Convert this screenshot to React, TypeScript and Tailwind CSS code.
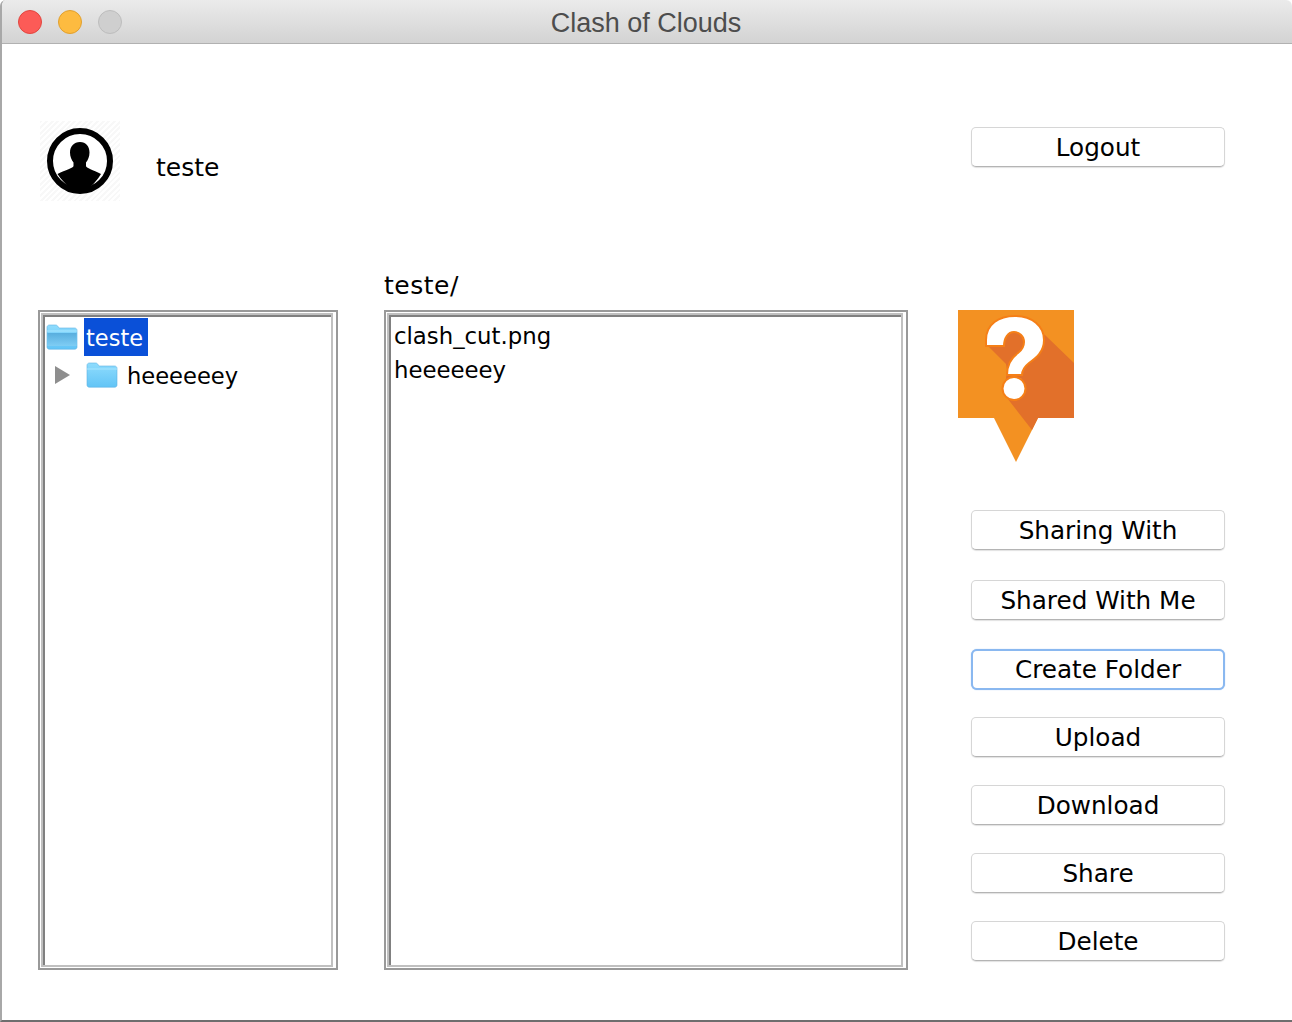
import React from 'react';

const FONT = "font-['DejaVu_Sans',sans-serif]";

const Folder: React.FC<{ selected?: boolean }> = ({ selected }) => (
  <svg width="32" height="26" viewBox="0 0 32 26" className="shrink-0">
    <defs>
      <linearGradient id="folderBody" x1="0" y1="0" x2="0" y2="1">
        <stop offset="0" stopColor="#8fdcfd" />
        <stop offset="1" stopColor="#62c4f6" />
      </linearGradient>
      <linearGradient id="folderShade" x1="0" y1="0" x2="0" y2="1">
        <stop offset="0" stopColor="#58aede" />
        <stop offset="1" stopColor="#7fcdf4" />
      </linearGradient>
    </defs>
    <path d="M1 3.5C1 2 2 1 3.500 1h6c1.200 0 1.800.5 2.500 1.500l1 1.500h15.500C30 4 31 5 31 6.500V23c0 1.300-1 2.200-2.200 2.200H3.200C2 25.200 1 24.300 1 23z" fill="url(#folderBody)" stroke="#5fb4e2" strokeWidth="0.6" />
    <path d="M1 7h30" stroke="#a9e6ff" strokeWidth="1" />
    {selected && <path d="M1.300 9h29.400v13H1.300z" fill="url(#folderShade)" />}
  </svg>
);

const HelpPin: React.FC = () => (
  <svg width="116" height="152" viewBox="0 0 116 152" className="block">
    <path d="M0 0h116v108H80l-22 44-22-44H0z" fill="#f39122" />
    <path d="M30 36L46 18l41 7 29 28v55H80l-6 12-28-36 3-24-1-6z" fill="#e2702a" />
    <path d="M28 30C28 14 41 6 57 6c17 0 29 10 29 24 0 12-8 18-15 23-5 4-7 7-7 12H49c0-10 4-17 11-22 4-3 6-6 6-11 0-6-5-10-10-10-6 0-10 6-10 14H28z" fill="#fff" stroke="#f57f17" strokeWidth="2" />
    <circle cx="56" cy="78.500" r="11.500" fill="#fff" stroke="#f57f17" strokeWidth="2" />
  </svg>
);

const Avatar: React.FC = () => (
  <div className="w-20 h-20 bg-[repeating-linear-gradient(135deg,#f8f8f8_0,#f8f8f8_2px,#ffffff_2px,#ffffff_4px)] flex items-center justify-center shrink-0">
    <svg width="68" height="68" viewBox="0 0 68 68">
      <circle cx="34" cy="34" r="30" fill="#fff" stroke="#000" strokeWidth="6" />
      <path d="M34 15c6 0 9.500 4.500 9.500 10.500 0 4-1.500 7.500-3.500 10v3.500c0 2 7 4 15 8C48 58 41 64 34 64S19 58 11.500 47c8-4 16-6 16-8v-3.500c-2-2.500-3.500-6-3.500-10C24 19.500 28 15 34 15z" fill="#000" />
    </svg>
  </div>
);

const MacButton: React.FC<{ label: string; focused?: boolean }> = ({ label, focused }) => (
  <button
    className={`w-[254px] bg-white pt-[2px] text-[24.700px] leading-none text-black flex items-center justify-center ${
      focused
        ? 'h-[41px] rounded-[6px] border-2 border-[#8ab8f0] shadow-[0_0_1px_#8ab8f0]'
        : 'h-10 rounded-[5px] border border-[#d6d6d6] border-b-[#b4b4b4] shadow-[0_1px_1px_rgba(0,0,0,0.12)]'
    }`}
  >
    {label}
  </button>
);

const Panel: React.FC<{ className: string; children: React.ReactNode }> = ({ className, children }) => (
  <div className={`h-[660px] border-2 border-[#999999] pt-px pl-px pb-px pr-[3px] ${className}`}>
    <div className="h-full border-2 border-[#c0c0c0]">
      <div className="h-full border-t-2 border-l-2 border-t-[#808080] border-l-[#808080] bg-white">
        {children}
      </div>
    </div>
  </div>
);

const App: React.FC = () => {
  return (
    <div className={`w-[1292px] h-[1022px] bg-white flex flex-col overflow-hidden border-l-2 border-l-[#a8a8a8] border-b-2 border-b-[#6e6e6e] rounded-t-[6px] ${FONT}`}>
      <div className="h-[44px] shrink-0 bg-gradient-to-b from-[#ebebeb] to-[#d3d3d3] border-b border-b-[#b1b1b1] flex items-center relative -ml-0.5">
        <div className="flex gap-4 pl-[18px]">
          <div className="w-6 h-6 rounded-full bg-[#fc5b57] border border-[#e2463f]" />
          <div className="w-6 h-6 rounded-full bg-[#fdbb40] border border-[#e1a02e]" />
          <div className="w-6 h-6 rounded-full bg-[#cfcfcf] border border-[#bdbdbd]" />
        </div>
        <div className="absolute inset-0 pt-1 flex items-center justify-center text-[27px] text-[#4d4d4d] font-['Liberation_Sans',sans-serif]">
          Clash of Clouds
        </div>
      </div>

      <div className="flex justify-between pl-[38px] pr-[67px] pt-[77px] h-[229px] shrink-0">
        <div className="flex items-center h-20 gap-9">
          <Avatar />
          <span className="mt-[14px] text-[25px] text-black">teste</span>
        </div>
        <div className="pt-1.5">
          <MacButton label="Logout" />
        </div>
      </div>

      <div className="flex pl-[36px]">
        <div className="pt-[37px]">
          <Panel className="w-[300px]">
            <div className="pt-px">
              <div className="flex items-center h-[38px] pl-px">
                <Folder selected />
                <span className="ml-1.5 w-16 pl-[2px] pt-[3px] h-[38px] bg-[#0a50d8] text-white text-[22.500px] flex items-center">teste</span>
              </div>
              <div className="flex items-center h-[38px] pl-2.5">
                <svg width="16" height="18" viewBox="0 0 16 18" className="shrink-0">
                  <path d="M0 0l15 9-15 9z" fill="#8e8e8e" />
                </svg>
                <div className="ml-[15px]"><Folder /></div>
                <span className="ml-[9px] pt-[3px] text-[22.600px] text-black">heeeeeey</span>
              </div>
            </div>
          </Panel>
        </div>

        <div className="ml-[46px]">
          <div className="h-[37px] text-[25px] leading-[25px] text-black tracking-[0.5px]">teste/</div>
          <Panel className="w-[524px]">
            <div className="pl-[3px] pt-[2px] text-[22.800px] leading-[34px] text-black">
              <div>clash_cut.png</div>
              <div>heeeeeey</div>
            </div>
          </Panel>
        </div>

        <div className="ml-[50px] pt-[37px]">
          <HelpPin />
          <div className="ml-[13px] mt-[48px] flex flex-col gap-[30px]">
            <MacButton label="Sharing With" />
            <MacButton label="Shared With Me" />
            <div className="-mt-px -mb-[3px]"><MacButton label="Create Folder" focused /></div>
            <div className="flex flex-col gap-7">
              <MacButton label="Upload" />
              <MacButton label="Download" />
              <MacButton label="Share" />
              <MacButton label="Delete" />
            </div>
          </div>
        </div>
      </div>
    </div>
  );
};

export default App;
